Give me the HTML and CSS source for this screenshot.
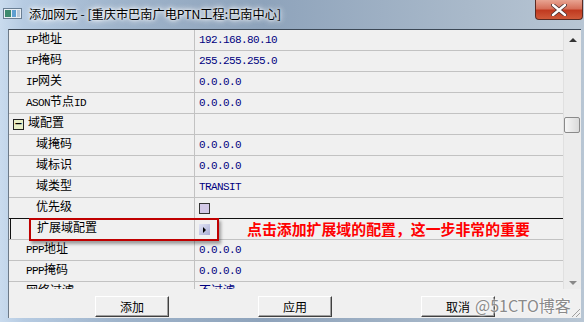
FILE: index.html
```html
<!DOCTYPE html>
<html lang="zh-CN">
<head>
    <meta charset="UTF-8">
    <link rel="stylesheet" href="styles.css">
    <title>添加网元</title>
</head>
<body>
    <div class="window">
        <!-- 标题栏 -->
        <div class="titlebar">
            <svg class="app-icon" width="19" height="11" viewBox="0 0 19 11">
                <rect x="0.5" y="0.5" width="18" height="10" fill="#e8eef4" stroke="#6a7f94"/>
                <rect x="2" y="2" width="6" height="7" fill="#3d8a6e"/>
                <rect x="9" y="2" width="4" height="7" fill="#5f9fd0"/>
                <rect x="14" y="2" width="3" height="7" fill="#b8c8d8"/>
            </svg>
            <span class="title">添加网元 - [重庆市巴南广电PTN工程:巴南中心]</span>
            <div class="close">
                <svg width="16" height="12" viewBox="0 0 16 12">
                    <path d="M2 1 L14 11 M14 1 L2 11" stroke="#4a3030" stroke-width="4" stroke-linecap="round"/>
                    <path d="M2 1 L14 11 M14 1 L2 11" stroke="#ffffff" stroke-width="2.4" stroke-linecap="round"/>
                </svg>
            </div>
        </div>

        <div class="frame">
            <div class="content">
                <div class="grid">
                    <div class="rows">
                        <div class="row"><div class="name top"><span class="en">IP</span>地址</div><div class="value">192.168.80.10</div></div>
                        <div class="row"><div class="name top"><span class="en">IP</span>掩码</div><div class="value">255.255.255.0</div></div>
                        <div class="row"><div class="name top"><span class="en">IP</span>网关</div><div class="value">0.0.0.0</div></div>
                        <div class="row"><div class="name top"><span class="en">ASON</span>节点<span class="en">ID</span></div><div class="value">0.0.0.0</div></div>
                        <div class="row"><div class="name group"><span class="toggle">−</span>域配置</div><div class="value"></div></div>
                        <div class="row"><div class="name child">域掩码</div><div class="value">0.0.0.0</div></div>
                        <div class="row"><div class="name child">域标识</div><div class="value">0.0.0.0</div></div>
                        <div class="row"><div class="name child">域类型</div><div class="value">TRANSIT</div></div>
                        <div class="row before-sel"><div class="name child">优先级</div><div class="value"><span class="check"></span></div></div>
                        <div class="row sel"><div class="name child">扩展域配置</div><div class="value"><span class="expand"></span></div></div>
                        <div class="row"><div class="name top"><span class="en">PPP</span>地址</div><div class="value">0.0.0.0</div></div>
                        <div class="row"><div class="name top"><span class="en">PPP</span>掩码</div><div class="value">0.0.0.0</div></div>
                        <div class="row"><div class="name top">网络过滤</div><div class="value cjk">不过滤</div></div>
                    </div>
                    <div class="scrollbar">
                        <span class="arrow up"></span>
                        <span class="thumb"></span>
                        <span class="arrow down"></span>
                    </div>
                </div>

                <div class="buttons">
                    <button class="btn">添加</button>
                    <button class="btn">应用</button>
                    <button class="btn">取消</button>
                </div>

                <!-- 标注 -->
                <div class="mark"></div>
                <div class="note">点击添加扩展域的配置，这一步非常的重要</div>
                <div class="watermark">@51CTO博客</div>
                <div class="grip"></div>
            </div>
        </div>
    </div>
</body>
</html>
```

FILE: styles.css
```css
/* 窗口 */
body {
    margin: 0;
    width: 584px;
    height: 322px;
    overflow: hidden;
    font-family: "Noto Sans CJK SC", sans-serif;
}

.window {
    width: 584px;
    height: 322px;
    display: flex;
    flex-direction: column;
    background: linear-gradient(90deg, #c9dbee 0%, #b6cbe2 4%, #9fb4cb 20%, #8ea3bb 45%, #a9b9ca 80%, #b8c6d4 100%);
}

.titlebar {
    height: 29px;
    display: flex;
    align-items: flex-start;
    position: relative;
    flex-shrink: 0;
}

.app-icon {
    margin: 8px 0 0 3px;
}

.title {
    margin: 6px 0 0 7px;
    font-size: 12.2px;
    line-height: 16px;
    color: #000;
    text-shadow: 0 0 6px #fff, 0 0 6px #fff, 0 0 3px #fff;
}

.close {
    position: absolute;
    right: 1px;
    top: 0;
    width: 46px;
    height: 19px;
    border: 1px solid #5a2a22;
    border-top: none;
    border-radius: 0 0 4px 4px;
    background: linear-gradient(180deg, #e8a492 0%, #d6705a 45%, #c03a20 55%, #cf5a3a 100%);
    display: flex;
    justify-content: center;
    align-items: center;
}

.frame {
    flex: 1;
    display: flex;
    padding: 0 4px 4px 8px;
}

.content {
    flex: 1;
    position: relative;
    background: #f0f0f0;
    border-top: 1px solid #3c4856;
    border-left: 1px solid #6d7a88;
    display: flex;
    flex-direction: column;
    font-family: "Liberation Mono", "Noto Sans CJK SC", monospace;
}

/* 属性表 */
.grid {
    height: 259px;
    display: flex;
    overflow: hidden;
}

.rows {
    width: 554px;
}

.row {
    height: 20px;
    display: flex;
    border-bottom: 1px solid #c2c2c2;
}

.row.before-sel {
    border-bottom-color: #111;
}

.name {
    width: 185px;
    border-right: 1px solid #c2c2c2;
    font-size: 12px;
    line-height: 20px;
    color: #000;
    white-space: nowrap;
}

.name.top {
    padding-left: 17px;
    width: 168px;
}

.name.child {
    padding-left: 27px;
    width: 158px;
}

.sel .name {
    box-shadow: inset 1px 0 0 #111;
    margin-left: 1px;
    width: 157px;
}

.name.group {
    padding-left: 4px;
    width: 181px;
    display: flex;
    align-items: center;
}

.en {
    font-size: 11px;
    letter-spacing: -0.6px;
}

.toggle {
    width: 9px;
    height: 9px;
    border: 1px solid #222;
    background: #e8efc8;
    font-size: 10px;
    line-height: 8px;
    text-align: center;
    margin-right: 4px;
    font-family: "DejaVu Sans", sans-serif;
    font-weight: bold;
}

.value {
    flex: 1;
    padding-left: 4px;
    font-size: 11px;
    letter-spacing: -0.6px;
    line-height: 20px;
    color: #000080;
    display: flex;
    align-items: center;
}

.value.cjk {
    font-size: 12px;
    letter-spacing: 0;
}

.check {
    width: 9px;
    height: 9px;
    border: 1px solid #333;
    background: #d2c8e6;
}

.expand {
    width: 11px;
    height: 11px;
    background: linear-gradient(135deg, #e2e4f4, #a8acd4);
    position: relative;
}

.expand::after {
    content: "";
    position: absolute;
    left: 4px;
    top: 3px;
    border-left: 3px solid #000;
    border-top: 3px solid transparent;
    border-bottom: 3px solid transparent;
}

.scrollbar {
    width: 17px;
    background: #ececec;
    border-left: 1px solid #e0e0e0;
    position: relative;
}

.arrow {
    position: absolute;
    left: 5px;
    border-left: 4px solid transparent;
    border-right: 4px solid transparent;
}

.arrow.up {
    top: 8px;
    border-bottom: 4px solid #333;
}

.arrow.down {
    top: 251px;
    border-top: 4px solid #888;
}

.thumb {
    position: absolute;
    left: 0;
    top: 87px;
    width: 14px;
    height: 14px;
    border: 1px solid #8a8a8a;
    border-radius: 2px;
    background: linear-gradient(90deg, #f6f6f6, #dadada);
}

/* 按钮 */
.buttons {
    display: flex;
    gap: 89px;
    padding: 7px 0 0 86px;
}

.btn {
    width: 74px;
    height: 21px;
    padding: 0;
    font-family: "Noto Sans CJK SC", sans-serif;
    font-size: 12px;
    line-height: 17px;
    background: #f0f0f0;
    border: 1px solid;
    border-color: #fff #404040 #404040 #fff;
    box-shadow: inset -1px -1px 0 #a0a0a0;
    color: #000;
}

/* 标注 */
.mark {
    position: absolute;
    left: 20px;
    top: 188px;
    width: 186px;
    height: 19px;
    border: 2px solid #c00000;
    box-shadow: 2px 3px 3px rgba(0, 0, 0, 0.35);
}

.note {
    position: absolute;
    left: 238px;
    top: 190px;
    font-family: "Noto Sans CJK SC", sans-serif;
    font-size: 14.9px;
    font-weight: bold;
    line-height: 17px;
    color: #ff0000;
    white-space: nowrap;
}

.watermark {
    position: absolute;
    left: 466px;
    top: 263px;
    font-family: "Noto Sans CJK SC", sans-serif;
    font-size: 16px;
    color: #8a8a8a;
    text-shadow: 0 0 3px #fff, 0 0 2px #fff;
    white-space: nowrap;
}

.grip {
    position: absolute;
    right: 1px;
    bottom: 1px;
    width: 10px;
    height: 10px;
    background: repeating-linear-gradient(135deg, transparent 0 2px, #a0a0a0 2px 3px);
    clip-path: polygon(100% 0, 100% 100%, 0 100%);
}
```
